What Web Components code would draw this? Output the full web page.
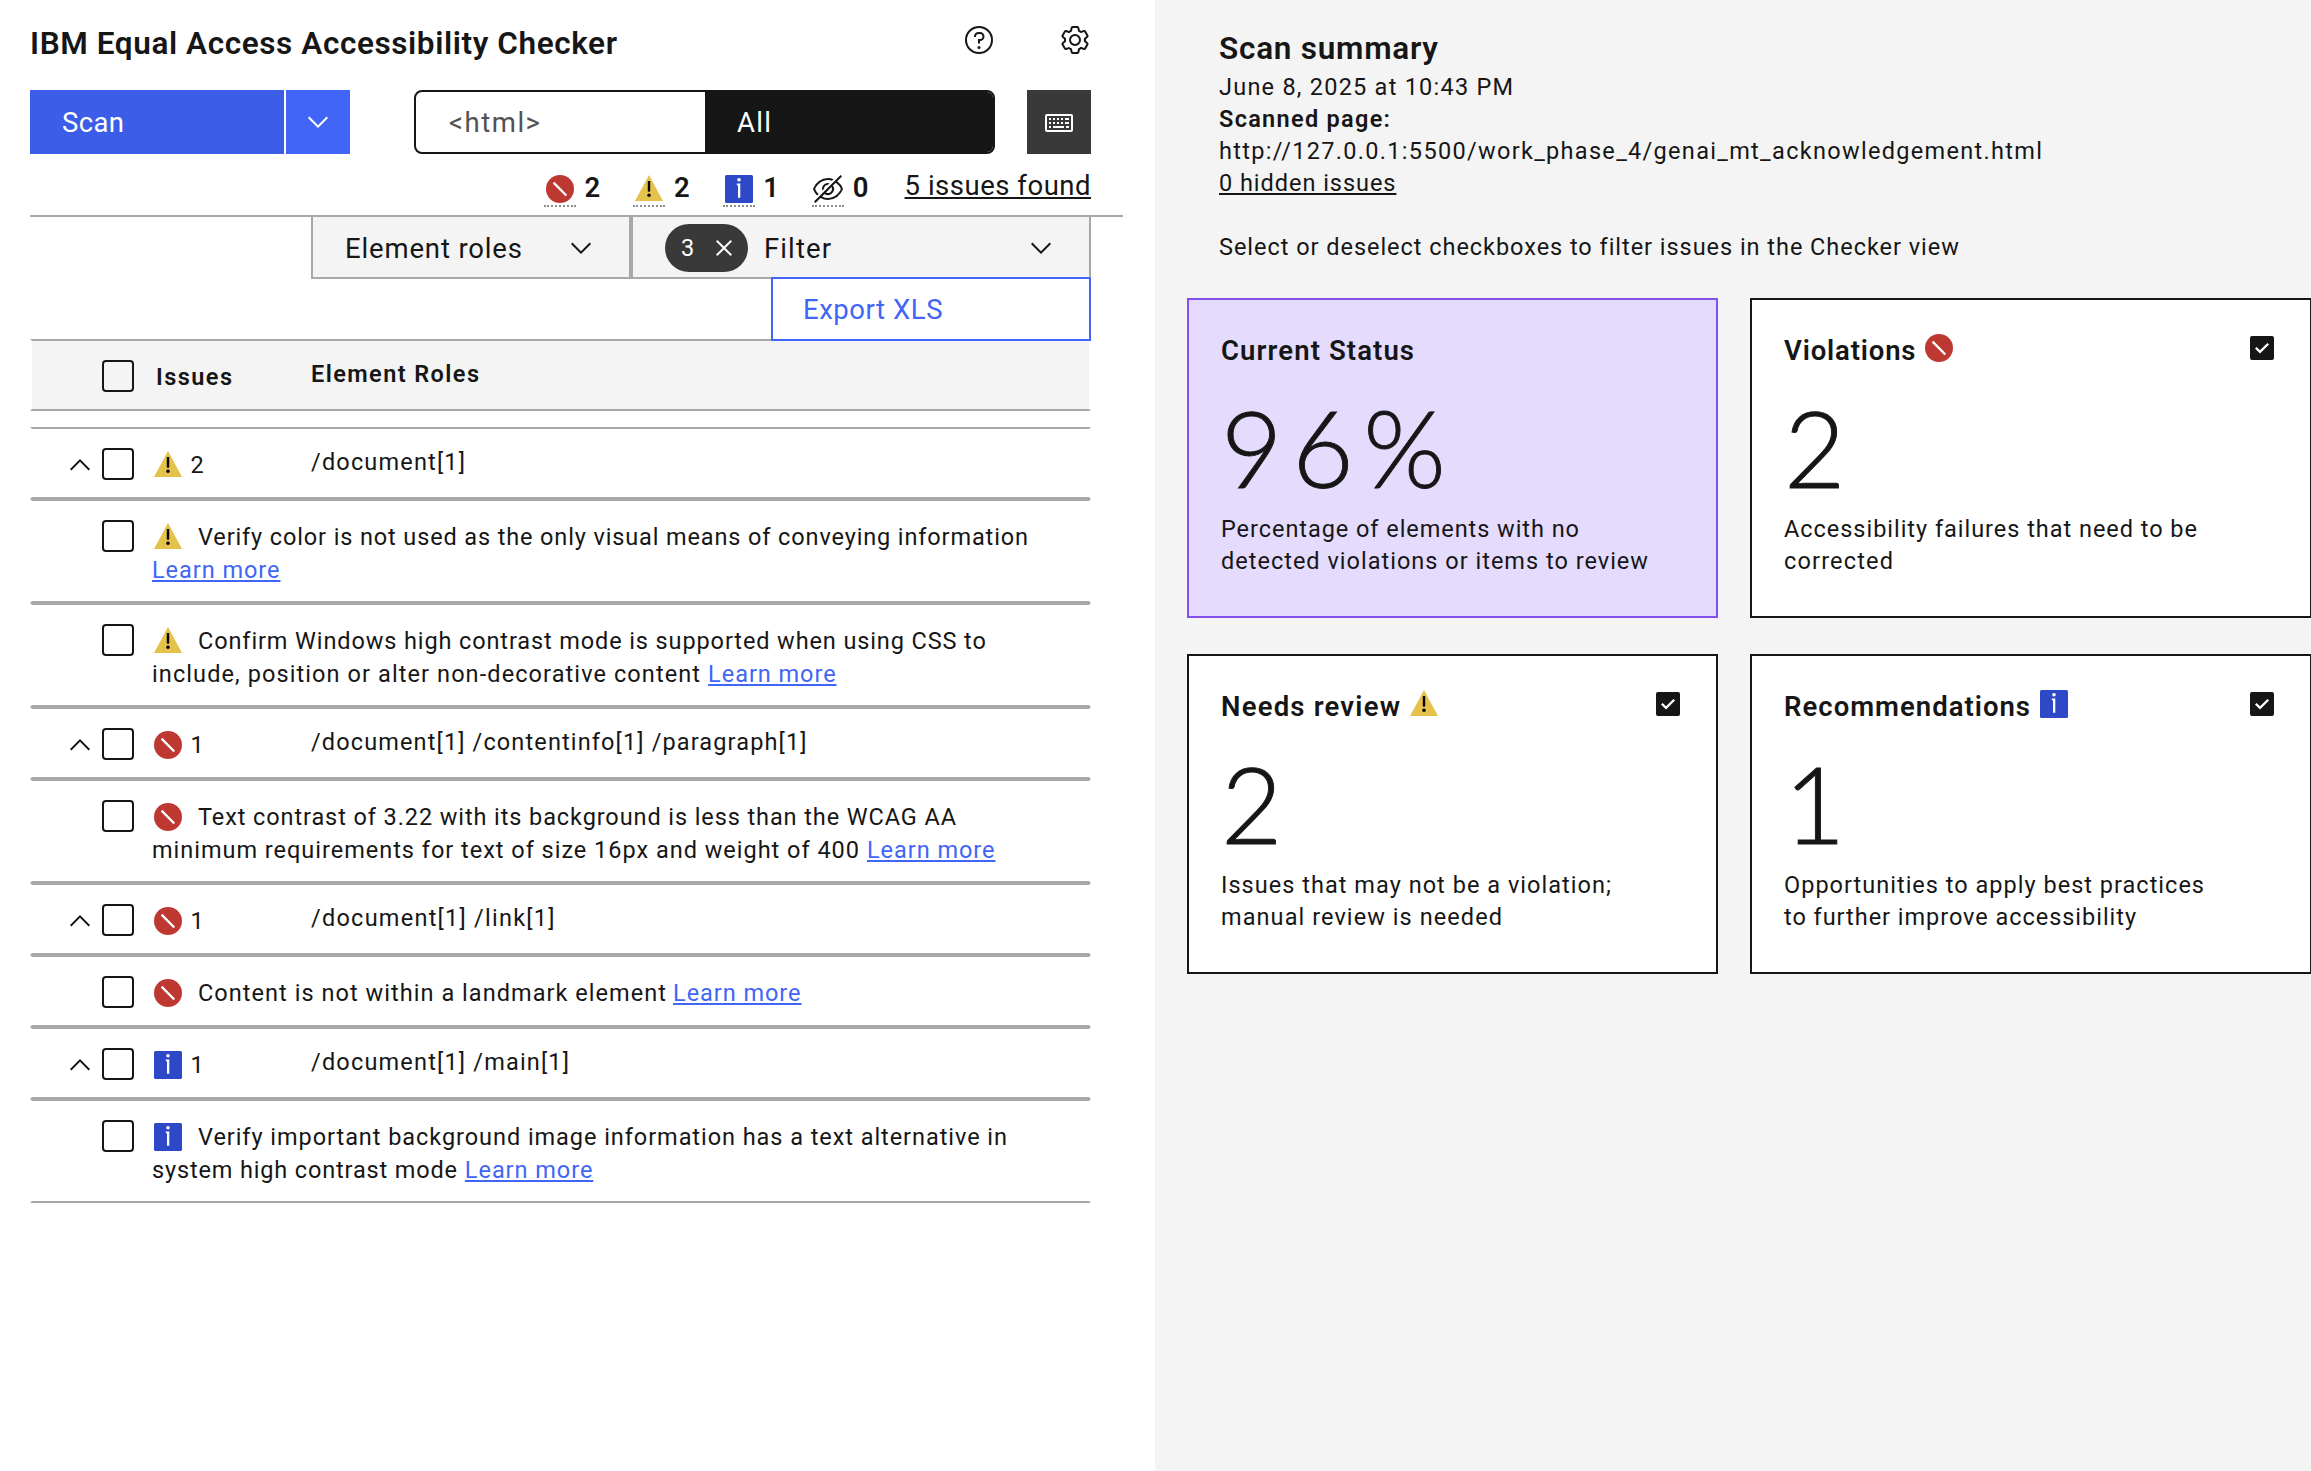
<!DOCTYPE html>
<html lang="en">
<head>
<meta charset="utf-8">
<title>Accessibility Checker</title>
<style>
html,body{margin:0;height:100%;overflow:hidden}
body{font-family:Roboto,"Liberation Sans",sans-serif;color:#161616;background:#fff;--line:#a8a8a8;--blue:#4165f6}
</style>
</head>
<body>
<checker-app></checker-app>
<script>
const ICONS={
help:'<path d="M16,2A14,14,0,1,0,30,16,14,14,0,0,0,16,2Zm0,26A12,12,0,1,1,28,16,12,12,0,0,1,16,28Z"/><circle cx="16" cy="23.5" r="1.5"/><path d="M17,8H15.5A4.49,4.49,0,0,0,11,12.5V13h2v-.5A2.5,2.5,0,0,1,15.5,10H17a2.5,2.5,0,0,1,0,5H15v4.5h2V17a4.5,4.5,0,0,0,0-9Z"/>',
settings:'<path d="M27,16.76c0-.25,0-.5,0-.76s0-.51,0-.77l1.92-1.68A2,2,0,0,0,29.3,11L26.94,7a2,2,0,0,0-1.73-1,2,2,0,0,0-.64.1l-2.43.82a11.35,11.35,0,0,0-1.31-.75l-.51-2.52a2,2,0,0,0-2-1.61H13.64a2,2,0,0,0-2,1.61l-.51,2.52a11.48,11.48,0,0,0-1.32.75L7.43,6.06A2,2,0,0,0,6.79,6,2,2,0,0,0,5.06,7L2.7,11a2,2,0,0,0,.41,2.51L5,15.24c0,.25,0,.5,0,.76s0,.51,0,.77L3.11,18.45A2,2,0,0,0,2.7,21L5.06,25a2,2,0,0,0,1.73,1,2,2,0,0,0,.64-.1l2.43-.82a11.35,11.35,0,0,0,1.31.75l.51,2.52a2,2,0,0,0,2,1.61h4.72a2,2,0,0,0,2-1.61l.51-2.52a11.48,11.48,0,0,0,1.32-.75l2.42.82a2,2,0,0,0,.64.1,2,2,0,0,0,1.73-1L29.3,21a2,2,0,0,0-.41-2.51ZM25.21,24l-3.43-1.16a8.86,8.86,0,0,1-2.71,1.57L18.36,28H13.64l-.71-3.55a9.36,9.36,0,0,1-2.7-1.57L6.79,24,4.43,20l2.72-2.4a8.9,8.9,0,0,1,0-3.13L4.43,12,6.79,8l3.43,1.16a8.86,8.86,0,0,1,2.71-1.57L13.64,4h4.72l.71,3.55a9.36,9.36,0,0,1,2.7,1.57L25.21,8,27.57,12l-2.72,2.4a8.9,8.9,0,0,1,0,3.13L27.57,20Z"/><path d="M16,22a6,6,0,1,1,6-6A5.94,5.94,0,0,1,16,22Zm0-10a3.91,3.91,0,0,0-4,4,3.91,3.91,0,0,0,4,4,3.91,3.91,0,0,0,4-4A3.91,3.91,0,0,0,16,12Z"/>',
down:'<path d="M16 22 6 12 7.4 10.6 16 19.2 24.6 10.6 26 12Z"/>',
up:'<path d="M16 10 26 20 24.6 21.4 16 12.8 7.4 21.4 6 20Z"/>',
close:'<path d="M24 9.4 22.6 8 16 14.6 9.4 8 8 9.4 14.6 16 8 22.6 9.4 24 16 17.4 22.6 24 24 22.6 17.4 16Z"/>',
keyboard:'<path d="M28,26H4a2,2,0,0,1-2-2V10A2,2,0,0,1,4,8H28a2,2,0,0,1,2,2V24A2,2,0,0,1,28,26ZM4,10V24H28V10Z"/><path d="M10 20H21V22H10zM6 12H8V14H6zM10 12H12V14H10zM14 12H16V14H14zM18 12H20V14H18zM22 12H26V14H22zM6 20H8V22H6zM23 20H26V22H23zM6 16H8V18H6zM10 16H12V18H10zM14 16H16V18H14zM18 16H20V18H18zM22 16H26V18H22z"/>',
violation:'<circle cx="16" cy="16" r="14" fill="#be3832"/><path d="M9.6 9.6 22.3 22.5" stroke="#fff" stroke-width="2.3"/>',
warning:'<path d="M16 2 30 28H2Z" fill="#e5c24b"/><path d="M14.8 8h2.4v10.6h-2.4z" fill="#000"/><circle cx="16" cy="22.3" r="1.7" fill="#000"/>',
info:'<rect x="2" y="2" width="28" height="28" rx="1.5" fill="#2e49c8"/><circle cx="16" cy="6.8" r="1.8" fill="#fff"/><path d="M13.8 10.5h3.5v14.2h-2.3v-12.4h-1.2z" fill="#fff"/>',
hidden:'<path d="M5.24,22.51l1.43-1.42A14.06,14.06,0,0,1,3.07,16C5.1,10.93,10.7,7,16,7a12.38,12.38,0,0,1,4,.72l1.55-1.56A14.72,14.72,0,0,0,16,5,16.69,16.69,0,0,0,1.06,15.66a1,1,0,0,0,0,.68A16,16,0,0,0,5.24,22.51Z"/><path d="M12 15.73a4 4 0 0 1 3.7-3.7l1.81-1.82a6 6 0 0 0-7.33 7.33zM30.94 15.66A16.4 16.4 0 0 0 25.2 8.22L30 3.41 28.59 2 2 28.59 3.41 30l5.1-5.1A15.29 15.29 0 0 0 16 27 16.69 16.69 0 0 0 30.94 16.34 1 1 0 0 0 30.94 15.66zM20 16a4 4 0 0 1-6 3.44L19.44 14A4 4 0 0 1 20 16zm-4 9a13.05 13.05 0 0 1-6-1.58l2.54-2.54a6 6 0 0 0 8.35-8.35l2.87-2.87A14.54 14.54 0 0 1 28.93 16C26.9 21.07 21.3 25 16 25z"/>',
checked:'<path d="M26,4H6A2,2,0,0,0,4,6V26a2,2,0,0,0,2,2H26a2,2,0,0,0,2-2V6A2,2,0,0,0,26,4ZM14,21.5,9,16.54,10.59,15,14,18.35,21.41,11l1.59,1.58Z"/>'
};
const define=(name,render,after)=>customElements.define(name,class extends HTMLElement{
  connectedCallback(){
    if(!this.shadowRoot)this.attachShadow({mode:'open'}).innerHTML=render(this);
    if(after)after(this);
  }
});

define('ui-icon',el=>`<style>:host{display:block;flex:none;width:32px;height:32px}svg{display:block;width:100%;height:100%;fill:currentColor}</style>
<svg viewBox="0 0 32 32" aria-hidden="true">${ICONS[el.getAttribute('name')]}</svg>`);

/* One line of text, tracked so that its glyphs span the width given in "w". */
define('fit-text',()=>`<style>
:host{display:block;flex:none;white-space:pre;font-size:23.5px;line-height:32px}
:host([size="l"]){font-size:27.5px;line-height:36px}
:host([size="xl"]){font-size:31.5px;line-height:40px}
:host([size="num"]){font-family:Lato,Roboto,sans-serif;font-size:106px;line-height:96px;font-weight:300;-webkit-text-stroke:.9px currentColor}
:host([bold]){font-weight:600}
:host([link]){text-decoration:underline;text-decoration-thickness:2px;text-underline-offset:2px;text-decoration-skip-ink:none}
:host([link=blue]){color:var(--blue)}
</style><span><slot></slot></span>`,el=>{
  const slot=el.querySelector('slot');
  const text=slot?slot.assignedNodes().map(n=>n.textContent).join(''):el.textContent;
  const w=+el.getAttribute('w'),n=text.length;
  if(!w||n<2)return;
  const bearings=el.getAttribute('size')==='num'?12:1;
  const natural=el.shadowRoot.querySelector('span').getBoundingClientRect().width;
  el.style.letterSpacing=((w+bearings-natural)/(n-1)).toFixed(3)+'px';
});

define('check-box',()=>`<style>:host{display:block;flex:none;box-sizing:border-box;width:32px;height:32px;border:2px solid #161616;border-radius:4px;margin:19px 18px 0 6px;background:transparent}</style>`);

define('app-header',()=>`<style>:host{display:flex;height:90px;width:1061px;box-sizing:border-box;padding-top:23px}
fit-text{margin-top:.5px}
.icons{display:flex;gap:64px;margin:1px 0 0 auto}</style>
<fit-text size="xl" bold w="586"><slot></slot></fit-text><div class="icons"><ui-icon name="help"></ui-icon><ui-icon name="settings"></ui-icon></div>`);

define('scan-bar',()=>`<style>:host{display:flex;height:64px;width:1061px}
.b{display:flex;box-sizing:border-box;height:64px;color:#fff;padding-top:15px}
.scan{width:254px;background:#3c5de7;padding-left:32px;margin-right:2px}
.more,.key{width:64px;padding:16px}.more{background:var(--blue)}.key{background:#393939}
.sw{width:581px;box-sizing:border-box;border:2px solid #161616;border-radius:8px;margin:0 32px 0 64px;display:flex;overflow:hidden}
.off{width:289px;color:#525252;padding:13px 0 0 33px;box-sizing:border-box}
.on{flex:1;background:#161616;color:#fff;padding:13px 0 0 32px}</style>
<div class="b scan"><fit-text size="l" w="61">Scan</fit-text></div><div class="b more"><ui-icon name="down"></ui-icon></div>
<div class="sw"><div class="off"><fit-text size="l" w="90">&lt;html&gt;</fit-text></div><div class="on"><fit-text size="l" w="33">All</fit-text></div></div>
<div class="b key"><ui-icon name="keyboard"></ui-icon></div>`);

define('issue-count',el=>`<style>:host{display:flex;width:89.4px;flex:none}
.i{margin-top:19px;height:32px;border-bottom:2px dotted #8d8d8d;margin-right:8.5px}
fit-text{margin-top:16px}</style><div class="i"><ui-icon name="${el.getAttribute('icon')}"></ui-icon></div><fit-text size="l" bold><slot></slot></fit-text>`);

define('count-bar',()=>`<style>:host{display:flex;box-sizing:border-box;width:1093px;height:63px;border-bottom:2px solid var(--line);padding-left:514px}
.all{margin:14px 0 0 3px}</style>
<issue-count icon="violation">2</issue-count><issue-count icon="warning">2</issue-count><issue-count icon="info">1</issue-count><issue-count icon="hidden">0</issue-count>
<div class="all"><fit-text size="l" link w="185">5 issues found</fit-text></div>`);

define('filter-bar',()=>`<style>:host{display:flex;width:780px;height:62px;margin-left:281px}
.d{display:flex;box-sizing:border-box;height:62px;border:2px solid var(--line);border-top:0;background:#f4f4f4}
.roles{width:320px;padding-left:32px}.filter{width:460px;padding-left:32px}
.d>fit-text{margin-top:14px}.d>ui-icon{margin:15px 32px 0 auto}
.pill{display:flex;box-sizing:border-box;width:83px;height:48px;border-radius:24px;background:#393939;color:#fff;margin:7px 16px 0 0;padding:8px 0 0 16px}
.pill ui-icon{margin:0 0 0 auto;padding-right:8px}</style>
<div class="d roles"><fit-text size="l" w="176">Element roles</fit-text><ui-icon name="down"></ui-icon></div>
<div class="d filter"><div class="pill"><fit-text>3</fit-text><ui-icon name="close"></ui-icon></div><fit-text size="l" w="66">Filter</fit-text><ui-icon name="down"></ui-icon></div>`);

define('export-button',()=>`<style>:host{display:block;position:relative;z-index:1;box-sizing:border-box;width:320px;height:64px;margin:-2px 0 -2px 741px;border:2px solid var(--blue);color:var(--blue);background:#fff;padding:13px 0 0 30px}</style><fit-text size="l" w="138.5">Export XLS</fit-text>`);

const rowBox='box-sizing:border-box;width:1061px;border:2px solid;border-color:var(--line) #fff;height:72px';

define('table-head',()=>`<style>:host{display:flex;${rowBox};background:#f4f4f4;padding-left:64px;margin-bottom:16px}
.a{margin:20px 0 0 4px;width:155px}.b{margin-top:17px}</style>
<check-box></check-box><div class="a"><fit-text bold w="75">Issues</fit-text></div><div class="b"><fit-text bold w="167">Element Roles</fit-text></div>`);

define('group-row',el=>`<style>:host{display:flex;${rowBox};padding-left:32px}
ui-icon{margin-top:20px}.c{margin:20px 0 0 6.5px;width:120.5px}.p{margin-top:17px}</style>
<ui-icon name="up"></ui-icon><check-box></check-box><ui-icon name="${el.getAttribute('icon')}"></ui-icon>
<div class="c"><fit-text>${el.getAttribute('count')}</fit-text></div><div class="p"><fit-text w="${el.getAttribute('w')}"><slot></slot></fit-text></div>`);

define('issue-row',()=>`<style>:host{display:flex;${rowBox};padding-left:64px}
:host([tall]){height:104px}
.t{padding-top:20px}::slotted(div){display:flex;height:33px}</style>
<check-box></check-box><div class="t"><slot></slot></div>`);

define('checker-panel',()=>`<style>:host{display:block;box-sizing:border-box;width:1155px;height:100%;padding-left:30px;background:#fff}
.table{display:flex;flex-direction:column}
.first{margin-left:14px}.gap{margin-left:7px}</style>
<app-header>IBM Equal Access Accessibility Checker</app-header><scan-bar></scan-bar><count-bar></count-bar><filter-bar></filter-bar><export-button></export-button>
<div class="table"><table-head></table-head>
<group-row icon="warning" count="2" w="153">/document[1]</group-row>
<issue-row tall><div><ui-icon name="warning"></ui-icon><fit-text class="first" w="829">Verify color is not used as the only visual means of conveying information</fit-text></div><div><fit-text link="blue" w="126.5">Learn more</fit-text></div></issue-row>
<issue-row tall><div><ui-icon name="warning"></ui-icon><fit-text class="first" w="786">Confirm Windows high contrast mode is supported when using CSS to</fit-text></div><div><fit-text w="547">include, position or alter non-decorative content</fit-text><fit-text class="gap" link="blue" w="126.5">Learn more</fit-text></div></issue-row>
<group-row icon="violation" count="1" w="494.5">/document[1] /contentinfo[1] /paragraph[1]</group-row>
<issue-row tall><div><ui-icon name="violation"></ui-icon><fit-text class="first" w="757">Text contrast of 3.22 with its background is less than the WCAG AA</fit-text></div><div><fit-text w="706">minimum requirements for text of size 16px and weight of 400</fit-text><fit-text class="gap" link="blue" w="126.5">Learn more</fit-text></div></issue-row>
<group-row icon="violation" count="1" w="242.5">/document[1] /link[1]</group-row>
<issue-row><div><ui-icon name="violation"></ui-icon><fit-text class="first" w="467">Content is not within a landmark element</fit-text><fit-text class="gap" style="margin-left:6px" link="blue" w="126.5">Learn more</fit-text></div></issue-row>
<group-row icon="info" count="1" w="257">/document[1] /main[1]</group-row>
<issue-row tall><div><ui-icon name="info"></ui-icon><fit-text class="first" w="808">Verify important background image information has a text alternative in</fit-text></div><div><fit-text w="304">system high contrast mode</fit-text><fit-text class="gap" link="blue" w="126.5">Learn more</fit-text></div></issue-row>
</div>`);

define('status-card',el=>{
  const icon=el.getAttribute('icon'),value=el.getAttribute('value');
  return `<style>:host{display:block;box-sizing:border-box;height:320px;border:2px solid #161616;background:#fff;padding:32px 32px 0 32px}
:host([current]){background:#e4dbfd;border-color:#854ff0}
.h{display:flex;height:36px}.h fit-text{margin-top:1px}.h .k{margin-left:7px}.h .c{margin-left:auto}
.n{padding:31px 0 18px 0}</style>
<div class="h"><fit-text size="l" bold w="${el.getAttribute('w')}">${el.getAttribute('label')}</fit-text>${icon?`<ui-icon class="k" name="${icon}"></ui-icon><ui-icon class="c" name="checked"></ui-icon>`:''}</div>
<div class="n"><fit-text size="num" ${value.length>1?'w="213"':''}>${value}</fit-text></div><slot></slot>`;});

define('summary-panel',()=>`<style>:host{display:block;box-sizing:border-box;width:1157px;height:100%;background:#f4f4f4;padding-left:32px}
.top{padding:29px 0 0 32px;height:269px;box-sizing:border-box;display:flex;flex-direction:column;align-items:flex-start}
.title{margin-bottom:2px}.note{margin-top:32px}
.grid{display:grid;grid-template-columns:531px 562px;gap:36px 32px;padding-top:29px}</style>
<div class="top"><fit-text class="title" size="xl" bold w="218">Scan summary</fit-text><fit-text w="293">June 8, 2025 at 10:43 PM</fit-text><fit-text bold w="170">Scanned page:</fit-text><fit-text w="822">http://127.0.0.1:5500/work_phase_4/genai_mt_acknowledgement.html</fit-text><fit-text link w="175.5">0 hidden issues</fit-text><fit-text class="note" w="738">Select or deselect checkboxes to filter issues in the Checker view</fit-text></div>
<div class="grid">
<status-card current label="Current Status" w="192" value="96%"><fit-text w="357">Percentage of elements with no</fit-text><fit-text w="426">detected violations or items to review</fit-text></status-card>
<status-card icon="violation" label="Violations" w="130.5" value="2"><fit-text w="412">Accessibility failures that need to be</fit-text><fit-text w="108">corrected</fit-text></status-card>
<status-card icon="warning" label="Needs review" w="178" value="2"><fit-text w="389">Issues that may not be a violation;</fit-text><fit-text w="280">manual review is needed</fit-text></status-card>
<status-card icon="info" label="Recommendations" w="245" value="1"><fit-text w="419">Opportunities to apply best practices</fit-text><fit-text w="351">to further improve accessibility</fit-text></status-card>
</div>`);

define('checker-app',()=>`<style>:host{display:flex;width:2312px;height:1471px}checker-panel,summary-panel{flex:none}</style><checker-panel></checker-panel><summary-panel></summary-panel>`);
</script>
</body>
</html>
